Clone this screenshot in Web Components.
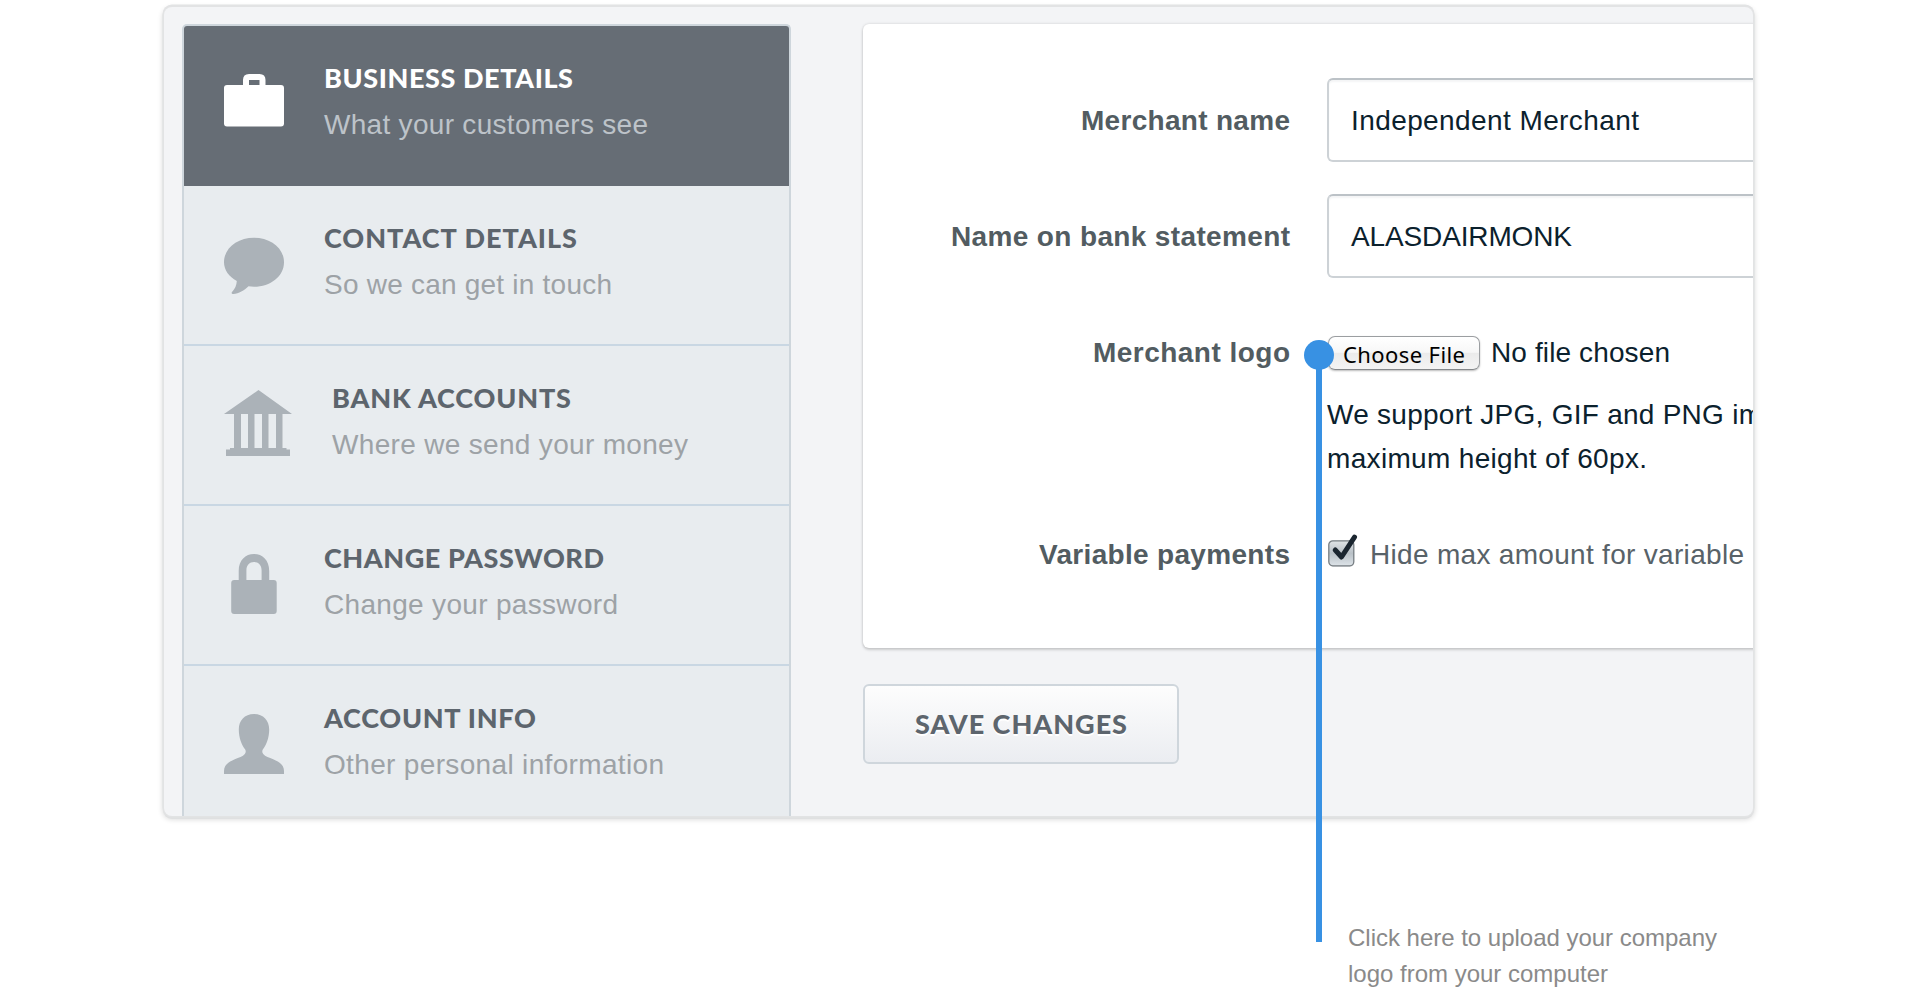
<!DOCTYPE html>
<html lang="en">
<head>
<meta charset="utf-8">
<title>Business details</title>
<style>
html,body{margin:0;background:#fff}
body{font-family:"Liberation Sans",Arial,sans-serif;font-size:28px;height:998px;overflow:hidden}
</style>
</head>
<body>
<settings-page></settings-page>
<script>
// One line of text, tracked so that it spans the width in its "w" attribute.
class TextLine extends HTMLElement {
  connectedCallback() {
    if (!this.shadowRoot) {
      this.attachShadow({mode: 'open'}).innerHTML =
        '<style>:host{display:block;white-space:pre}span{display:inline-block}</style><span><slot></slot></span>';
    }
    const w = parseFloat(this.getAttribute('w'));
    const span = this.shadowRoot.querySelector('span');
    const n = this.textContent.length;
    if (w && n > 1) {
      span.style.letterSpacing = ((w - span.getBoundingClientRect().width) / (n - 1)) + 'px';
      this.style.width = w + 'px';
    }
  }
}

const ICONS = {
  briefcase: [60, 60, '<path fill-rule="evenodd" d="M19 13V8q0-6 6-6h10.500q6 0 6 6v5H57q3 0 3 3v35.500q0 3-3 3H3q-3 0-3-3V16q0-3 3-3zM25 13V8h10.500v5z"/>'],
  bubble: [60, 60, '<path d="M30 3.700C46.500 3.700 60 14 60 28.200S46.500 52.700 30 52.700q-3 0-5.500-.4C20 56.500 14 60.500 8.500 60q-1.500-.6-.5-2c3-3 4.600-7 4.800-11C5 42.500 0 36 0 28.200 0 14 13.500 3.700 30 3.700z"/>'],
  bank: [68, 66, '<path d="M34.500 -4 68 20H0zM10 20h7v34h-7zM24 20h6.500v34H24zM38 20h6.500v34H38zM52 20h6.500v34H52zM6 54h56.500v1.500H66v6.500H2v-6.500h4z"/>'],
  lock: [60, 60, '<path fill-rule="evenodd" d="M14.700 26V17C14.700 6 21.500 0 30 0s15.200 6 15.200 17v9h4.500q3 0 3 3v28q0 3-3 3H10.200q-3 0-3-3V29q0-3 3-3zM22.400 26h15.200V16.500C37.600 11 34.500 8 30 8s-7.600 3-7.600 8.500z"/>'],
  person: [60, 60, '<path d="M30 0c9.500 0 15.200 6.500 15.200 15.500 0 8.500-3 15.500-6.400 20-.8 1.500-.7 3.500.4 4.500 2 2.600 6 3.500 10 5.200C57 48.500 60 52 60 57v3H0v-3c0-5 3-8.500 10.800-11.800 4-1.700 8-2.600 10-5.200 1.100-1 1.200-3 .4-4.500-3.400-4.500-6.400-11.500-6.400-20C14.800 6.500 20.500 0 30 0z"/>']
};

class NavItem extends HTMLElement {
  connectedCallback() {
    const a = k => this.getAttribute(k);
    const [w, h, art] = ICONS[a('icon')];
    this.attachShadow({mode: 'open'}).innerHTML = `
    <style>
      :host{display:flex;box-sizing:border-box;height:160px;padding:36px 0 0 40px;border-bottom:2px solid #c9d7e3;background:#e8ecef;color:#5d656d}
      :host([active]){background:#666d75;border-color:#666d75;color:#fff}
      svg{display:block;flex:none;margin:12px 40px 0 0;overflow:visible;fill:#abb2b8}
      :host([active]) svg{fill:#fff;margin-top:10px}
      .t{font:900 27px/32px Lato,sans-serif}
      .s{font-size:28px;line-height:32px;color:#9da2a6;margin-top:15px}
      :host([active]) .s{color:#bdc3c9}
    </style>
    <svg width="${w}" height="${h}" viewBox="0 0 ${w} ${h}">${art}</svg>
    <div><text-line class="t" w="${a('tw')}">${a('label')}</text-line>
    <text-line class="s" w="${a('sw')}">${a('note')}</text-line></div>`;
  }
}

class SideNav extends HTMLElement {
  connectedCallback() {
    this.attachShadow({mode: 'open'}).innerHTML = `
    <style>
      :host{display:block;box-sizing:border-box;width:609px;height:810px;flex:none;border:2px solid #ced6dc;border-bottom:0;border-radius:5px 5px 0 0;overflow:hidden;background:#e8ecef}
    </style><slot></slot>`;
  }
}

class FormRow extends HTMLElement {
  connectedCallback() {
    this.attachShadow({mode: 'open'}).innerHTML = `
    <style>
      :host{display:grid;grid-template-columns:427px 1fr;column-gap:37px}
      text-line{justify-self:end;font-weight:700;line-height:32px;color:#525c61}
      ::slotted(*){min-width:0}
    </style>
    <text-line w="${this.getAttribute('lw')}">${this.getAttribute('label')}</text-line><slot></slot>`;
  }
}

class TextField extends HTMLElement {
  connectedCallback() {
    this.attachShadow({mode: 'open'}).innerHTML = `
    <style>
      :host{display:block;box-sizing:border-box;width:520px;height:84px;padding:25px 0 0 22px;border:2px solid #cdd2d6;border-top-color:#bcc2c7;border-radius:6px;background:#fff;box-shadow:inset 0 2px 2px #f4f5f6;color:#0b212d}
      text-line{line-height:32px}
    </style>
    <text-line w="${this.getAttribute('w')}">${this.getAttribute('value')}</text-line>`;
  }
}

class FilePicker extends HTMLElement {
  connectedCallback() {
    this.attachShadow({mode: 'open'}).innerHTML = `
    <style>
      :host{display:block;color:#0b212d}
      .row{display:flex;height:36px}
      .btn{box-sizing:border-box;width:152px;height:34px;margin:-1px 11px 0 1px;padding:1px 0 0 14px;border:1px solid #9b9ea1;border-bottom-color:#85888b;border-radius:7px;background:linear-gradient(#fff 0,#f7f7f7 48%,#ebebeb 50%,#f4f4f4 100%);box-shadow:0 1px 2px #bbb;color:#000;font:22px/32px "Noto Sans",sans-serif}
      .name{line-height:32px}
      .help{line-height:44px}
      .first{margin-top:20px}
    </style>
    <div class="row"><div class="btn"><text-line w="122">Choose File</text-line></div><text-line class="name" w="179">No file chosen</text-line></div>
    <text-line class="help first" w="435">We support JPG, GIF and PNG im</text-line>
    <text-line class="help" w="320">maximum height of 60px.</text-line>`;
  }
}

class CheckOption extends HTMLElement {
  connectedCallback() {
    this.attachShadow({mode: 'open'}).innerHTML = `
    <style>
      :host{display:flex;color:#586268}
      svg{display:block;flex:none;width:26px;height:26px;margin:1px 16px 0 1px;overflow:visible}
      text-line{line-height:32px}
    </style>
    <svg viewBox="0 0 26 26"><defs><linearGradient id="g" x2="0" y2="1"><stop stop-color="#e0e4e7"/><stop offset=".5" stop-color="#b9c1c7"/><stop offset="1" stop-color="#dde3e8"/></linearGradient></defs>
    <rect x="1" y="1.500" width="25" height="25" rx="4" fill="#c9ccce"/><rect x=".8" y=".8" width="25" height="25" rx="4" fill="url(#g)" stroke="#777e83" stroke-width="1.300"/>
    <path d="M7.200 10 13.500 17 26.500-2.800" fill="none" stroke="#1b2630" stroke-width="5" stroke-linecap="round" stroke-linejoin="round"/></svg>
    <text-line w="374">Hide max amount for variable</text-line>`;
  }
}

class SaveButton extends HTMLElement {
  connectedCallback() {
    this.attachShadow({mode: 'open'}).innerHTML = `
    <style>
      :host{display:block;box-sizing:border-box;width:316px;height:80px;padding:22px 0 0 50px;border:2px solid #cfd6dc;border-radius:6px;background:linear-gradient(#fdfdfd,#ebedf1);color:#5d656d;font:900 27px/32px Lato,sans-serif;text-shadow:0 2px 0 #fff}
    </style><text-line w="212">SAVE CHANGES</text-line>`;
  }
}

class CallOut extends HTMLElement {
  connectedCallback() {
    this.attachShadow({mode: 'open'}).innerHTML = `
    <style>
      :host{display:block;margin:104px 0 0 1348px;font-size:24px;line-height:36px;color:#8a8a8a}
      .pin{position:absolute;left:1304px;top:340px;width:30px;height:602px}
      .pin svg{display:block}
    </style>
    <div class="pin"><svg width="30" height="602"><path d="M12 15h6v587h-6z" fill="#3891e3"/><circle cx="15" cy="15" r="15" fill="#3891e3"/></svg></div>
    <text-line w="369">Click here to upload your company</text-line>
    <text-line w="260">logo from your computer</text-line>`;
  }
}

class SettingsPage extends HTMLElement {
  connectedCallback() {
    this.attachShadow({mode: 'open'}).innerHTML = `
    <style>
      :host{display:block;position:relative;height:998px;overflow:hidden}
      .panel{display:flex;box-sizing:border-box;width:1589px;height:809px;margin:7px 0 0 164px;padding:17px 0 0 18px;overflow:hidden;border-radius:8px;background:#f3f4f6;box-shadow:0 0 0 1.500px #e2e3e4,0 -1px 0 1.500px #e2e3e4,0 2px 0 1px #dfe0e1,0 2px 5px 2px rgba(0,0,0,.13)}
      .main{margin-left:72px;flex:none}
      .card{box-sizing:border-box;width:1010px;height:624px;padding-top:54px;border-radius:6px;background:#fff;box-shadow:0 0 3px rgba(0,0,0,.15),0 2px 3px rgba(0,0,0,.15)}
      /* Labels of boxed fields sit on the baseline of the value inside the box. */
      .boxed{box-sizing:border-box;height:116px;padding-top:27px;align-items:start}
      .boxed text-field{margin-top:-27px}
      .logo{margin-top:27px;height:202px}
      save-button{margin-top:36px}
    </style>
    <div class="panel">
      <side-nav>
        <nav-item active icon="briefcase" label="BUSINESS DETAILS" tw="249" note="What your customers see" sw="324"></nav-item>
        <nav-item icon="bubble" label="CONTACT DETAILS" tw="253" note="So we can get in touch" sw="288"></nav-item>
        <nav-item icon="bank" label="BANK ACCOUNTS" tw="239" note="Where we send your money" sw="356"></nav-item>
        <nav-item icon="lock" label="CHANGE PASSWORD" tw="280" note="Change your password" sw="294"></nav-item>
        <nav-item icon="person" label="ACCOUNT INFO" tw="212" note="Other personal information" sw="340"></nav-item>
      </side-nav>
      <div class="main">
        <div class="card">
          <form-row class="boxed" label="Merchant name" lw="209"><text-field value="Independent Merchant" w="288"></text-field></form-row>
          <form-row class="boxed" label="Name on bank statement" lw="339"><text-field value="ALASDAIRMONK" w="221"></text-field></form-row>
          <form-row class="logo" label="Merchant logo" lw="197"><file-picker></file-picker></form-row>
          <form-row label="Variable payments" lw="251"><check-option></check-option></form-row>
        </div>
        <save-button></save-button>
      </div>
    </div>
    <call-out></call-out>`;
  }
}

customElements.define('text-line', TextLine);
customElements.define('nav-item', NavItem);
customElements.define('side-nav', SideNav);
customElements.define('form-row', FormRow);
customElements.define('text-field', TextField);
customElements.define('file-picker', FilePicker);
customElements.define('check-option', CheckOption);
customElements.define('save-button', SaveButton);
customElements.define('call-out', CallOut);
customElements.define('settings-page', SettingsPage);
</script>
</body>
</html>
